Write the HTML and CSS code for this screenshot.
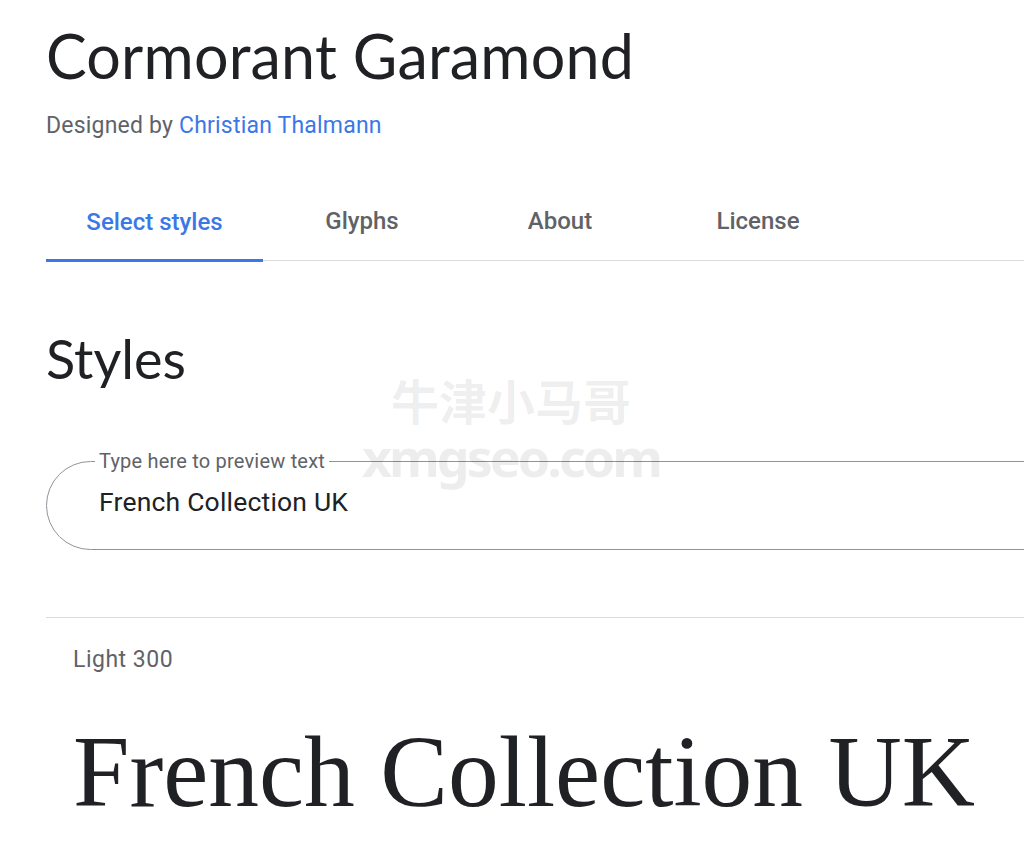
FILE: index.html
```html
<!DOCTYPE html>
<html lang="en">
<head>
<meta charset="utf-8">
<title>Cormorant Garamond - Google Fonts</title>
<link rel="stylesheet" href="styles.css">
</head>
<body>
<main class="page">
  <header class="family-header">
    <h1 class="family-title">Cormorant Garamond</h1>
    <p class="designer">Designed by <a class="designer-link" href="#">Christian Thalmann</a></p>
  </header>

  <nav class="tabs">
    <a class="tab tab-active" href="#">Select styles</a>
    <a class="tab" href="#">Glyphs</a>
    <a class="tab" href="#">About</a>
    <a class="tab" href="#">License</a>
  </nav>

  <section class="styles-section">
    <h2 class="section-title">Styles</h2>
    <fieldset class="preview-field">
      <legend class="preview-label">Type here to preview text</legend>
      <div class="preview-input">French Collection UK</div>
    </fieldset>

    <div class="style-row">
      <div class="style-name">Light 300</div>
      <div class="style-sample">French Collection UK</div>
    </div>
  </section>

  <div class="watermark" aria-hidden="true">
    <div class="wm-cn">牛津小马哥</div>
    <div class="wm-en">xmgseo.com</div>
  </div>
</main>
</body>
</html>
```

FILE: styles.css
```css
html, body {
  margin: 0;
  padding: 0;
  background: #ffffff;
  overflow: hidden;
}

body {
  font-family: Roboto, "Liberation Sans", sans-serif;
  color: #202124;
}

.page {
  position: relative;
  padding-left: 46px;
  width: 1100px;
  height: 866px;
}

.family-header {
  padding-top: 20px;
}

.family-title {
  margin: 0;
  font-family: Lato, "Open Sans", sans-serif;
  font-weight: 400;
  font-size: 61px;
  line-height: 72px;
  letter-spacing: 0.2px;
  color: #202124;
}

.designer {
  margin: 20px 0 0;
  font-size: 23px;
  line-height: 28px;
  letter-spacing: 0.2px;
  color: #5f6368;
}

.designer-link {
  color: #3b78e7;
  text-decoration: none;
}

.tabs {
  display: flex;
  margin-top: 42px;
  border-bottom: 1px solid #dadce0;
  height: 78px;
}

.tab {
  display: flex;
  align-items: center;
  justify-content: center;
  width: 198px;
  height: 78px;
  box-sizing: border-box;
  font-size: 24px;
  font-weight: 500;
  color: #5f6368;
  text-decoration: none;
}

.tab-active {
  width: 217px;
  color: #3b78e7;
  border-bottom: 3px solid #3b78e7;
  margin-bottom: -2px;
  height: 80px;
  padding-top: 2px;
}

.styles-section {
  padding-top: 68px;
}

.section-title {
  margin: 0;
  font-family: Lato, "Open Sans", sans-serif;
  font-weight: 400;
  font-size: 54px;
  line-height: 60px;
  color: #202124;
}

.preview-field {
  margin: 61px 0 0;
  padding: 0 0 0 52px;
  height: 100px;
  box-sizing: border-box;
  border: 1px solid #8f9499;
  border-radius: 45px;
  width: 1060px;
}

.preview-label {
  padding: 0 4px;
  font-size: 20px;
  line-height: 22px;
  letter-spacing: 0.2px;
  color: #5f6368;
  margin-left: -4px;
}

.preview-input {
  padding-top: 14px;
  font-size: 26.5px;
  line-height: 32px;
  letter-spacing: 0.2px;
  color: #202124;
}

.style-row {
  margin-top: 67px;
  border-top: 1px solid #dadce0;
  padding: 28px 0 0 27px;
}

.style-name {
  font-size: 23px;
  line-height: 28px;
  letter-spacing: 0.5px;
  color: #5f6368;
}

.style-sample {
  margin-top: 38px;
  font-family: "Liberation Serif", "DejaVu Serif", serif;
  font-size: 101.5px;
  line-height: 120px;
  color: #202124;
  white-space: nowrap;
}

.watermark {
  position: absolute;
  left: 346px;
  top: 370px;
  width: 330px;
  text-align: center;
  color: rgba(0, 0, 0, 0.07);
  font-weight: 700;
  pointer-events: none;
}

.wm-cn {
  font-family: "Noto Sans CJK SC", sans-serif;
  font-size: 48px;
  line-height: 58px;
}

.wm-en {
  font-family: "Noto Sans", "Liberation Sans", sans-serif;
  font-size: 52px;
  line-height: 58px;
  letter-spacing: -3px;
}
```
